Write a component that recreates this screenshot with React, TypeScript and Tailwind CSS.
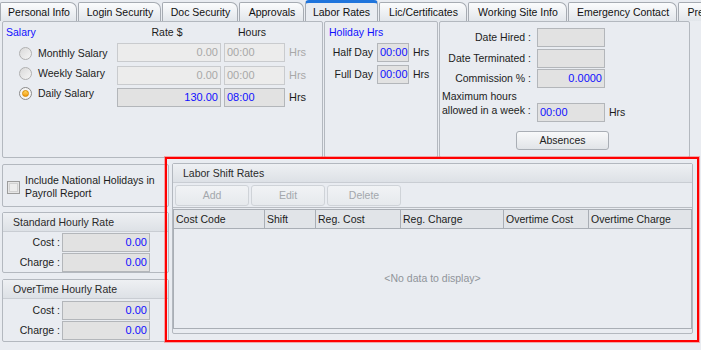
import React from "react";

const sans = "font-['Liberation_Sans',Arial,sans-serif]";
const blue = "text-[#1010ff]";

const tabs = [
  { label: "Personal Info", w: "w-[77px]" },
  { label: "Login Security", w: "w-[83px]" },
  { label: "Doc Security", w: "w-[76px]" },
  { label: "Approvals", w: "w-[65px]" },
  { label: "Labor Rates", w: "w-[73px]", active: true },
  { label: "Lic/Certificates", w: "w-[88px]" },
  { label: "Working Site Info", w: "w-[99px]" },
  { label: "Emergency Contact", w: "w-[109px]" },
  { label: "Previous Employment", w: "w-[120px]" },
];

function TabStrip() {
  return (
    <div className="flex items-end gap-[1px] h-[21px] overflow-hidden">
      {tabs.map((t) =>
        t.active ? (
          <div
            key={t.label}
            className={`${t.w} shrink-0 h-[21px] flex items-center justify-center bg-[#e9ecf1] border border-b-0 border-[#a6abb2] border-t-[3px] border-t-[#1f74dc] rounded-t-[4px] pt-[1px] text-[#111]`}
          >
            {t.label}
          </div>
        ) : (
          <div
            key={t.label}
            className={`${t.w} shrink-0 h-[19px] flex items-center justify-center pl-[1px] bg-gradient-to-b from-[#fbfcfd] to-[#e2e6eb] border border-b-0 border-[#a6abb2] rounded-tl-[2px] rounded-tr-[7px] whitespace-nowrap overflow-hidden text-[#111]`}
          >
            {t.label}
          </div>
        )
      )}
    </div>
  );
}

function Field({
  value,
  w,
  off = false,
  left = false,
}: {
  value?: string;
  w: string;
  off?: boolean;
  left?: boolean;
}) {
  return (
    <div
      className={`${w} h-[19px] shrink-0 border flex items-center px-[2px] text-[11px] ${
        left ? "justify-start" : "justify-end"
      } ${off ? "bg-[#ececec] border-[#c9cbce] text-[#a8a8a8]" : `bg-[#e2e2e2] border-[#b3b6ba] ${blue}`}`}
    >
      {value}
    </div>
  );
}

function Radio({ checked = false }: { checked?: boolean }) {
  return (
    <div
      className={`w-[13px] h-[13px] shrink-0 rounded-full border flex items-center justify-center ${
        checked ? "border-[#8a8a8a] bg-[#f4f4f4]" : "border-[#b0b0b0] bg-gradient-to-br from-[#d9d9d9] to-[#f6f6f6]"
      }`}
    >
      {checked && (
        <div className="w-[7px] h-[7px] rounded-full bg-gradient-to-b from-[#ffd75a] to-[#f29a00] border border-[#d98a00]" />
      )}
    </div>
  );
}

function SalaryPanel() {
  const rows = [
    { label: "Monthly Salary", rate: "0.00", off: true },
    { label: "Weekly Salary", rate: "0.00", off: true },
    { label: "Daily Salary", rate: "130.00", hrs: "08:00", checked: true },
  ];
  return (
    <div className="w-[321px] h-[137px] shrink-0 border border-[#b3b8bf] rounded-[2px]">
      <div className="flex h-[20px] items-center">
        <span className={`w-[114px] pl-[3px] ${blue}`}>Salary</span>
        <span className="w-[100px] text-center">Rate $</span>
        <span className="w-[70px] text-center">Hours</span>
      </div>
      <div className="flex">
        <div className="w-[114px] pl-[16px] pt-[1px] flex flex-col">
          {rows.map((r) => (
            <div key={r.label} className="h-[20px] flex items-center gap-[6px]">
              <Radio checked={r.checked} />
              <span>{r.label}</span>
            </div>
          ))}
        </div>
        <div className="flex flex-col pt-[1px]">
          {rows.map((r, i) => (
            <div
              key={r.label}
              className={`flex items-center ${i === 1 ? "mt-[4px]" : i === 2 ? "mt-[3px]" : ""}`}
            >
              <Field w="w-[104px]" value={r.rate} off={r.off} />
              <div className="w-[3px]" />
              <Field w="w-[61px]" value={r.hrs ?? "00:00"} off={r.off} left />
              <span className={`ml-[4px] text-[11px] ${r.off ? "text-[#a8a8a8]" : ""}`}>Hrs</span>
            </div>
          ))}
        </div>
      </div>
    </div>
  );
}

function HolidayPanel() {
  return (
    <div className="w-[114px] h-[137px] shrink-0 border border-[#b3b8bf] rounded-[2px]">
      <div className={`h-[20px] flex items-center pl-[4px] ${blue}`}>Holiday Hrs</div>
      {["Half Day", "Full Day"].map((l, i) => (
        <div key={l} className={`flex items-center ${i === 0 ? "mt-[1px]" : "mt-[3px]"}`}>
          <span className="w-[48px] text-right">{l}</span>
          <div className="w-[4px]" />
          <Field w="w-[32px]" value="00:00" left />
          <span className="ml-[4px]">Hrs</span>
        </div>
      ))}
    </div>
  );
}

function InfoPanel() {
  const rows = [
    { label: "Date Hired :", value: "" },
    { label: "Date Terminated :", value: "" },
    { label: "Commission % :", value: "0.0000" },
  ];
  return (
    <div className="w-[251px] h-[137px] shrink-0 border border-[#b3b8bf] rounded-[2px] pt-[6px]">
      {rows.map((r, i) => (
        <div key={r.label} className={`flex items-center ${i === 1 ? "mt-[2px]" : i === 2 ? "mt-[1px]" : ""}`}>
          <span className="w-[91px] text-right">{r.label}</span>
          <div className="w-[6px]" />
          <Field w="w-[68px]" value={r.value} />
        </div>
      ))}
      <div className="flex items-start">
        <div className="w-[97px] pl-[2px] pt-[1px] leading-[14px]">
          Maximum hours
          <br />
          allowed in a week :
        </div>
        <div className="mt-[15px] flex items-center">
          <Field w="w-[68px]" value="00:00" left />
          <span className="ml-[4px]">Hrs</span>
        </div>
      </div>
      <div className="mt-[9px] pl-[76px]">
        <button className="w-[93px] h-[19px] rounded-[3px] border border-[#a9aeb5] bg-gradient-to-b from-[#f8f9fa] to-[#e1e4e8] text-[#222] flex items-center justify-center">
          Absences
        </button>
      </div>
    </div>
  );
}

function Band({ title, pl = "pl-[10px]" }: { title: string; pl?: string }) {
  return (
    <div
      className={`h-[19px] shrink-0 flex items-center ${pl} bg-gradient-to-b from-[#eef0f3] to-[#dde1e6] border-b border-[#c9cdd3] text-[#2a2a2a]`}
    >
      {title}
    </div>
  );
}

function RatePanel({ title, body }: { title: string; body: string }) {
  return (
    <div className="border border-[#b3b8bf] rounded-[2px] flex flex-col">
      <Band title={title} />
      <div className={`flex flex-col gap-[1px] ${body}`}>
        {["Cost :", "Charge :"].map((l) => (
          <div key={l} className="flex items-center">
            <span className="w-[57px] text-right">{l}</span>
            <div className="w-[2px]" />
            <Field w="w-[88px]" value="0.00" />
          </div>
        ))}
      </div>
    </div>
  );
}

function ShiftRates() {
  const cols = [
    { label: "Cost Code", w: "w-[91px]" },
    { label: "Shift", w: "w-[51px]" },
    { label: "Reg. Cost", w: "w-[85px]" },
    { label: "Reg. Charge", w: "w-[103px]" },
    { label: "Overtime Cost", w: "w-[85px]" },
    { label: "Overtime Charge", w: "flex-1" },
  ];
  return (
    <div className="w-[521px] h-[171px] shrink-0 border border-[#b3b8bf] rounded-[2px] flex flex-col">
      <Band title="Labor Shift Rates" />
      <div className="h-[25px] shrink-0 flex items-center gap-[2px] pl-[2px] border-b border-[#b9bdc3]">
        {["Add", "Edit", "Delete"].map((b) => (
          <div
            key={b}
            className="w-[74px] h-[21px] rounded-[3px] border border-[#cfd3d8] bg-gradient-to-b from-[#f1f3f5] to-[#e6e9ed] text-[#a3a7ac] flex items-center justify-center"
          >
            {b}
          </div>
        ))}
      </div>
      <div className="mt-[1px] h-[120px] border border-[#a9aeb5] flex flex-col">
        <div className="h-[19px] shrink-0 flex bg-[#e1e4e8] border-b border-[#a9aeb5]">
          {cols.map((c, i) => (
            <div
              key={c.label}
              className={`${c.w} h-full flex items-center pl-[2px] ${i < cols.length - 1 ? "border-r border-[#a9aeb5]" : ""}`}
            >
              {c.label}
            </div>
          ))}
        </div>
        <div className="flex-1 flex items-center justify-center text-[#90949a]">&lt;No data to display&gt;</div>
      </div>
    </div>
  );
}

export default function App() {
  return (
    <div
      className={`relative w-[701px] h-[350px] overflow-hidden bg-[#e9ecf1] text-[10.5px] leading-none text-[#1c1c1c] ${sans}`}
    >
      <TabStrip />
      <div className="flex gap-[1px] pl-[2px]">
        <SalaryPanel />
        <HolidayPanel />
        <InfoPanel />
      </div>
      <div className="flex gap-[3px] pl-[2px] mt-[5px]">
        <div className="w-[167px] shrink-0 flex flex-col pt-[1px]">
          <div className="h-[43px] border border-[#b3b8bf] rounded-[2px] flex items-center pl-[4px] pt-[3px]">
            <div className="w-[13px] h-[13px] shrink-0 border border-[#9c9c9c] bg-[#e6e6e6] flex items-center justify-center">
              <div className="w-[9px] h-[9px] bg-[#ededed] border border-[#d2d2d2]" />
            </div>
            <div className="ml-[5px] leading-[13px]">
              Include National Holidays in
              <br />
              Payroll Report
            </div>
          </div>
          <div className="mt-[5px]">
            <RatePanel title="Standard Hourly Rate" body="pt-[1px]" />
          </div>
          <div className="mt-[6px]">
            <RatePanel title="OverTime Hourly Rate" body="pt-[2px] pb-[1px]" />
          </div>
        </div>
        <ShiftRates />
      </div>
      <div className="absolute left-[165px] top-[157px] w-[534px] h-[185px] border-2 border-[#ff0000] shadow-[0_0_0_1px_rgba(255,80,80,0.45)] pointer-events-none" />
    </div>
  );
}
